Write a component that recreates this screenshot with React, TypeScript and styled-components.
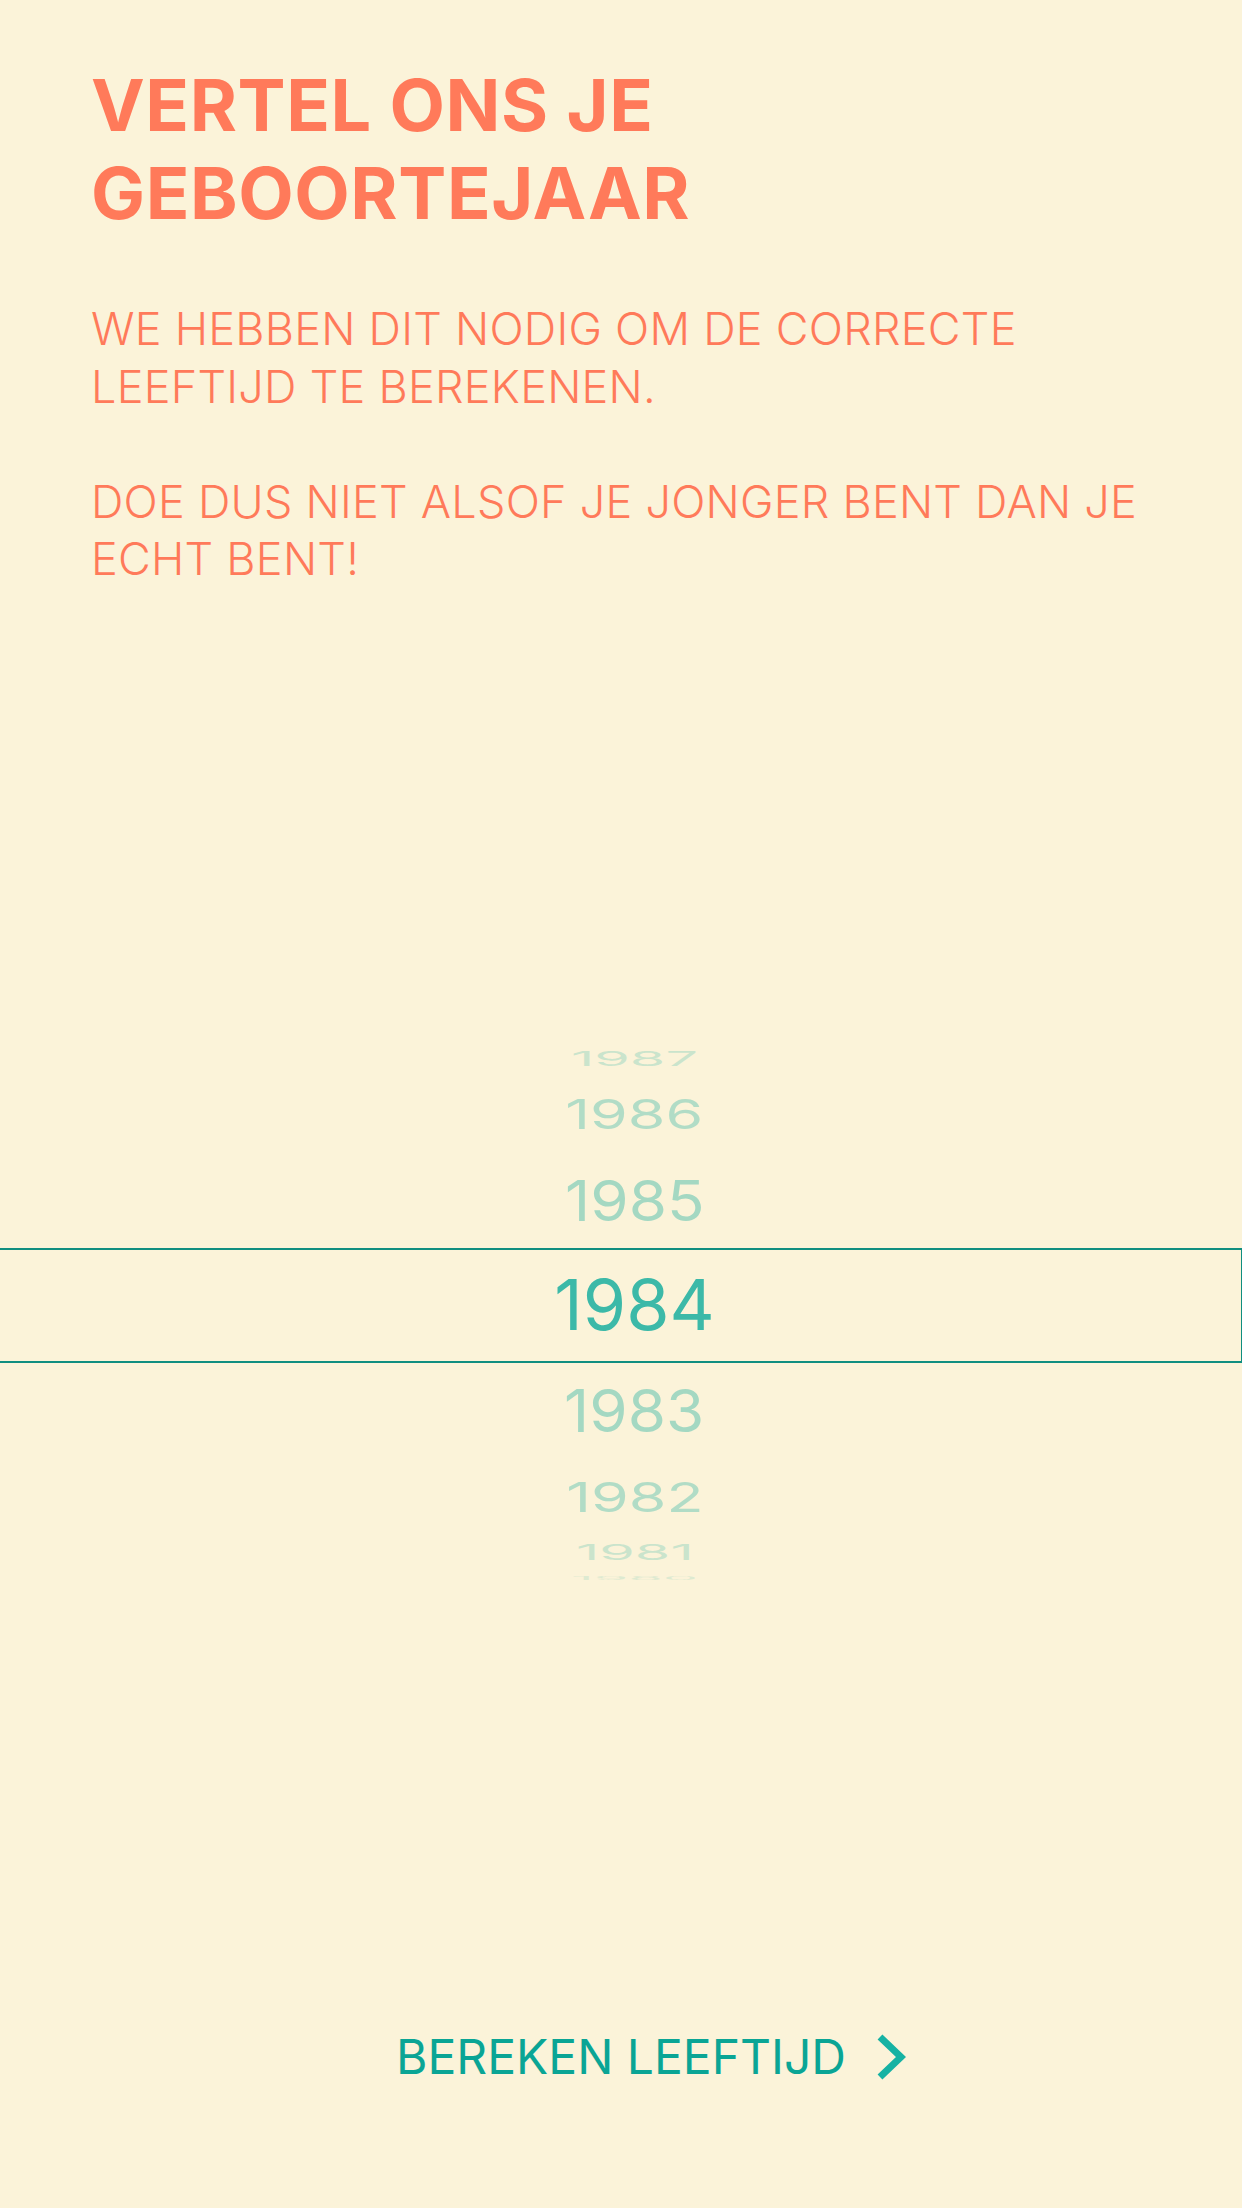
import React from "react";
import styled, { createGlobalStyle } from "styled-components";

const GlobalStyle = createGlobalStyle`
  html, body {
    margin: 0;
    padding: 0;
    background: #fbf3d9;
  }
  body {
    font-family: Inter, "Noto Sans", "Liberation Sans", sans-serif;
  }
`;

const Page = styled.div`
  min-height: 2208px;
  width: 1242px;
  background: #fbf3d9;
  display: flex;
  flex-direction: column;
  overflow: hidden;
`;

const Header = styled.header`
  padding: 61px 91px 0;
  display: flex;
  flex-direction: column;
`;

const Title = styled.h1`
  margin: 0;
  font-family: Inter, sans-serif;
  font-weight: 700;
  font-size: 72px;
  line-height: 88px;
  letter-spacing: 0.6px;
  color: #ff7a5a;
  text-transform: uppercase;
`;

const Intro = styled.div`
  margin-top: 63px;
  display: flex;
  flex-direction: column;
  gap: 57.5px;
`;

const Paragraph = styled.p`
  margin: 0;
  font-family: Inter, sans-serif;
  font-weight: 300;
  font-size: 45px;
  line-height: 57.5px;
  letter-spacing: 0.25px;
  color: #ff7a5a;
`;

const Wheel = styled.div`
  position: relative;
  margin-top: 451px;
  padding-left: 27px;
  display: flex;
  flex-direction: column;
`;

const Row = styled.div<{ $h: number }>`
  height: ${(p) => p.$h}px;
  display: flex;
  align-items: center;
  justify-content: center;
  overflow: visible;
`;

const Year = styled.span`
  display: block;
  font-family: Inter, sans-serif;
  font-weight: 400;
  font-size: 70px;
  line-height: 1;
  color: #3cb9a8;
  transform-origin: center center;
  white-space: nowrap;
`;

const SelectionBox = styled.div`
  position: absolute;
  left: -4px;
  right: 0;
  top: 209px;
  height: 115px;
  box-sizing: border-box;
  border: 2px solid #0f8e80;
  border-right-width: 1.5px;
  pointer-events: none;
`;

const Action = styled.button`
  margin-top: 445px;
  height: 60px;
  width: 100%;
  background: none;
  border: 0;
  padding: 0;
  display: grid;
  grid-template-columns: 1fr auto 1fr;
  align-items: center;
  cursor: pointer;
`;

const ActionLabel = styled.span`
  grid-column: 2;
  font-family: Inter, sans-serif;
  font-weight: 400;
  font-size: 48px;
  line-height: 1;
  color: #0aa595;
  white-space: nowrap;
`;

const Chevron = styled.svg`
  grid-column: 3;
  justify-self: start;
  margin-left: 31px;
  width: 29px;
  height: 46px;
`;

type Item = { year: number; h: number; sx: number; sy: number; op: number };

const items: Item[] = [
  { year: 1987, h: 40, sx: 0.82, sy: 0.29, op: 0.25 },
  { year: 1986, h: 70, sx: 0.87, sy: 0.59, op: 0.38 },
  { year: 1985, h: 104, sx: 0.885, sy: 0.8, op: 0.45 },
  { year: 1984, h: 105, sx: 1, sy: 1, op: 1 },
  { year: 1983, h: 106, sx: 0.885, sy: 0.84, op: 0.45 },
  { year: 1982, h: 66, sx: 0.87, sy: 0.59, op: 0.38 },
  { year: 1981, h: 44, sx: 0.82, sy: 0.31, op: 0.25 },
  { year: 1980, h: 8, sx: 0.8, sy: 0.06, op: 0.15 },
];

export default function App() {
  return (
    <Page>
      <GlobalStyle />
      <Header>
        <Title>
          Vertel ons je
          <br />
          geboortejaar
        </Title>
        <Intro>
          <Paragraph>WE HEBBEN DIT NODIG OM DE CORRECTE LEEFTIJD TE BEREKENEN.</Paragraph>
          <Paragraph>DOE DUS NIET ALSOF JE JONGER BENT DAN JE ECHT BENT!</Paragraph>
        </Intro>
      </Header>
      <Wheel>
        {items.map((it) => (
          <Row key={it.year} $h={it.h}>
            <Year style={{ transform: `scale(${it.sx}, ${it.sy})`, opacity: it.op }}>
              {it.year}
            </Year>
          </Row>
        ))}
        <SelectionBox />
      </Wheel>
      <Action>
        <ActionLabel>BEREKEN LEEFTIJD</ActionLabel>
        <Chevron viewBox="0 0 29 46" aria-hidden="true">
          <polyline
            points="3,3 24,23 3,43"
            fill="none"
            stroke="#16b2a3"
            strokeWidth="7"
            strokeLinejoin="miter"
          />
        </Chevron>
      </Action>
    </Page>
  );
}
